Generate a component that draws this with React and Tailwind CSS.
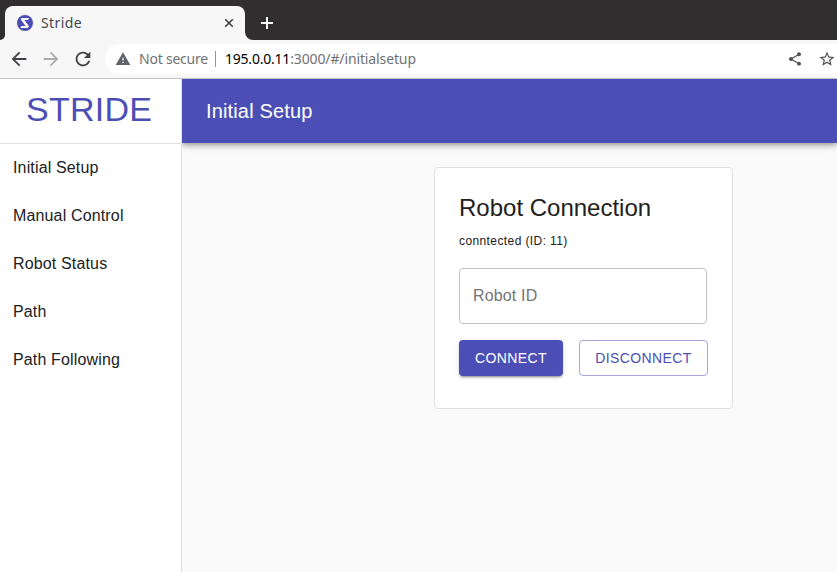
import React from "react";
import { MdArrowBack, MdArrowForward, MdRefresh, MdWarning, MdShare, MdStarBorder } from "react-icons/md";

const uiFont = "font-['Noto_Sans','Open_Sans',sans-serif]";
const links = ["Initial Setup", "Manual Control", "Robot Status", "Path", "Path Following"];

function Favicon() {
  return (
    <svg viewBox="0 0 16 16" className="size-4 shrink-0">
      <circle cx="8" cy="8" r="8" fill="#4b4fb5" />
      <path d="M4.2 3H12L11 5H7.4L12 11.2L10.6 13H3.2L4.6 11H8.6L4 4.8Z" fill="#fff" />
    </svg>
  );
}

function TabStrip() {
  return (
    <div className="flex h-10 bg-[#302e2f] pt-1.5">
      <div className="flex w-[5px] items-end bg-[#f7f7f7]">
        <div className="h-full w-full rounded-br-[7px] bg-[#302e2f]" />
      </div>
      <div className="flex w-60 items-center rounded-t-lg bg-[#f7f7f7] pl-3 pr-[11px] [box-shadow:0_-8px_0_#302e2f]">
        <Favicon />
        <span className="ml-2 grow text-[14px] leading-5 tracking-[0.4px] text-[#45474a]">Stride</span>
        <svg viewBox="0 0 10 10" className="size-2.5" stroke="#3c4043" strokeWidth="1.6">
          <path d="M1.2 1.2L8.8 8.8M8.8 1.2L1.2 8.8" />
        </svg>
      </div>
      <div className="flex grow bg-[#f7f7f7]">
        <div className="flex grow items-center rounded-bl-lg bg-[#302e2f] pl-4">
          <svg viewBox="0 0 12 12" className="size-3" stroke="#fff" strokeWidth="2">
            <path d="M6 0V12M0 6H12" />
          </svg>
        </div>
      </div>
    </div>
  );
}

function Toolbar() {
  return (
    <div className="flex h-[39px] items-center border-b border-[#c2c2c2] bg-[#f7f7f7] pl-2">
      <MdArrowBack className="size-[22px] shrink-0 text-[#404246]" />
      <MdArrowForward className="ml-2.5 size-[22px] shrink-0 text-[#acacac]" />
      <MdRefresh className="ml-2.5 size-[22px] shrink-0 text-[#404246]" />
      <div className="ml-[11px] flex h-[30px] grow items-center rounded-l-full bg-white pl-2.5 text-[14px] leading-5 text-[#6f7174]">
        <MdWarning className="size-4 shrink-0 text-[#5f6368]" />
        <span className="ml-2 w-[76px] whitespace-nowrap tracking-[-0.22px]">Not secure</span>
        <span className="h-4 w-px bg-[#929497]" />
        <span className="ml-[9px] grow whitespace-nowrap tracking-[-0.12px]">
          <span className="tracking-[-0.22px] text-black">195.0.0.11</span>:3000/#/initialsetup
        </span>
        <MdShare className="mr-[15px] size-4 shrink-0 text-[#505256]" />
        <MdStarBorder className="mr-px size-[18px] shrink-0 text-[#505256]" />
      </div>
    </div>
  );
}

function RobotCard() {
  return (
    <section className="ml-[252px] mt-6 h-[242px] w-[299px] rounded border border-[#e0e0e0] bg-white p-6">
      <h2 className="text-[24px] leading-8">Robot Connection</h2>
      <p className="mt-[7px] text-[12px] leading-5 tracking-[0.4px]">conntected (ID: 11)</p>
      <div className="mt-[17px] flex h-14 w-[248px] items-center rounded border border-[#c4c4c4] px-[13px] text-[16px] tracking-[0.15px] text-[#757575]">
        Robot ID
      </div>
      <div className="mt-4 flex gap-4 text-[14px] leading-6 tracking-[0.4px]">
        <button className="h-9 w-[104px] rounded bg-[#4b4fb5] text-white shadow-[0_3px_1px_-2px_rgba(0,0,0,0.2),0_2px_2px_0_rgba(0,0,0,0.14),0_1px_5px_0_rgba(0,0,0,0.12)]">
          CONNECT
        </button>
        <button className="h-9 w-[129px] rounded border border-[#a5a7da] text-[#4b4fb5]">DISCONNECT</button>
      </div>
    </section>
  );
}

export default function App() {
  return (
    <div className="flex h-[572px] w-[837px] flex-col overflow-hidden bg-[#fafafa] font-['Liberation_Sans',Arial,sans-serif] text-[#212121]">
      <div className={uiFont}>
        <TabStrip />
        <Toolbar />
      </div>
      <div className="flex grow">
        <nav className="w-[182px] shrink-0 border-r border-[#e0e0e0] bg-white">
          <div className="h-[65px] border-b border-[#e0e0e0] pl-[26px] pt-[9px] text-[34px] leading-[42px] tracking-[0.25px] text-[#4b4fb5]">
            STRIDE
          </div>
          <ul>
            {links.map((label) => (
              <li key={label} className="flex h-12 items-center pl-[13px] text-[16px] leading-6 tracking-[0.15px]">
                {label}
              </li>
            ))}
          </ul>
        </nav>
        <div className="grow">
          <header className="flex h-16 items-center bg-[#4b4fb5] pl-6 text-[20px] leading-8 tracking-[0.15px] text-white shadow-[0_2px_4px_-1px_rgba(0,0,0,0.2),0_4px_5px_0_rgba(0,0,0,0.14),0_1px_10px_0_rgba(0,0,0,0.12)] [clip-path:inset(0_0_-20px_0)]">
            Initial Setup
          </header>
          <RobotCard />
        </div>
      </div>
    </div>
  );
}
